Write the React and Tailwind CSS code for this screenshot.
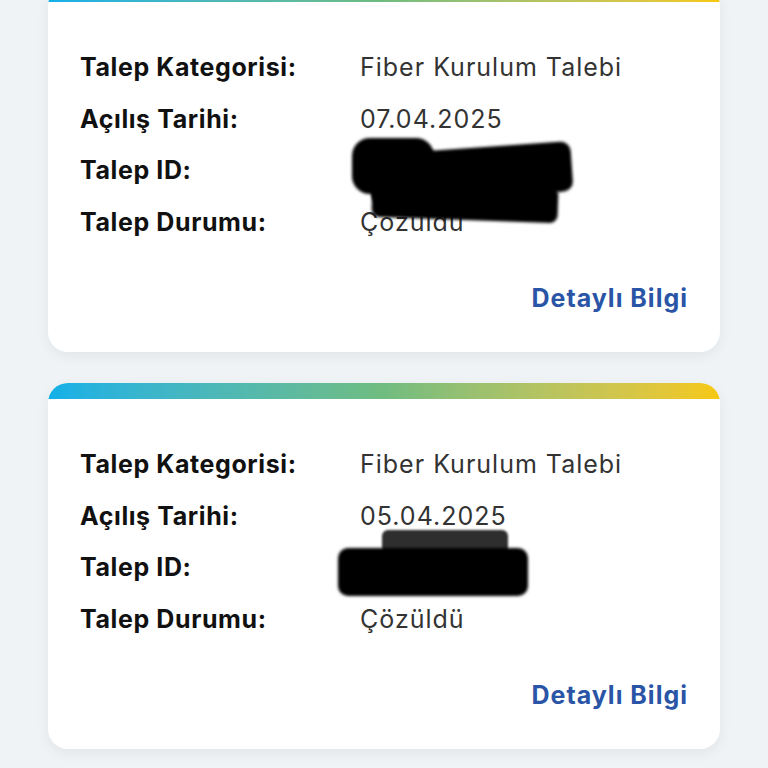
import React from "react";

const rows = (date) => [
  { label: "Talep Kategorisi:", value: "Fiber Kurulum Talebi" },
  { label: "Açılış Tarihi:", value: date },
  { label: "Talep ID:", value: "" },
  { label: "Talep Durumu:", value: "Çözüldü" },
];

function Redaction1() {
  return (
    <>
      <div className="absolute left-[304px] top-[136px] w-[82px] h-[56px] rounded-[18px] bg-black blur-[1.5px]" />
      <div className="absolute left-[322px] top-[146px] w-[202px] h-[50px] rounded-[10px] bg-black blur-[1.5px] -rotate-[4deg]" />
      <div className="absolute left-[324px] top-[182px] w-[186px] h-[36px] rounded-[8px] bg-black blur-[1.5px] rotate-[2deg]" />
    </>
  );
}

function Redaction2() {
  return (
    <>
      <div className="absolute left-[334px] top-[131px] w-[126px] h-[24px] rounded-[6px] bg-[#2e2e2e] blur-[1px]" />
      <div className="absolute left-[290px] top-[149px] w-[190px] h-[48px] rounded-[10px] bg-black blur-[1.5px]" />
    </>
  );
}

function Card({ date, redaction, className = "" }) {
  return (
    <div className={"rounded-[20px] bg-white shadow-[0_4px_14px_rgba(0,0,0,0.06)] overflow-hidden " + className}>
      <div className="h-4 rounded-t-[18px] bg-gradient-to-r from-[#10b0e8] via-[#70bc80] to-[#f6c80a]" />
      <div className="relative pt-[40px] pb-[38px] px-8">
        {rows(date).map((r) => (
          <div key={r.label} className="flex leading-[51.5px] text-[25px]">
            <div className="w-[280px] font-bold text-[#111] tracking-[0.6px]">{r.label}</div>
            <div className="text-[#333] tracking-[1px]">{r.value}</div>
          </div>
        ))}
        <div className="mt-[34px] text-right text-[25px] leading-8 font-bold text-[#2a55a6] tracking-[1px]">
          Detaylı Bilgi
        </div>
        {redaction}
      </div>
    </div>
  );
}

export default function App() {
  return (
    <div
      className="w-[768px] h-[768px] overflow-hidden bg-[#f0f3f5] px-12"
      style={{ fontFamily: "Inter, 'Noto Sans', sans-serif" }}
    >
      <Card date="07.04.2025" redaction={<Redaction1 />} className="-mt-[14px]" />
      <Card date="05.04.2025" redaction={<Redaction2 />} className="mt-[31px]" />
    </div>
  );
}
